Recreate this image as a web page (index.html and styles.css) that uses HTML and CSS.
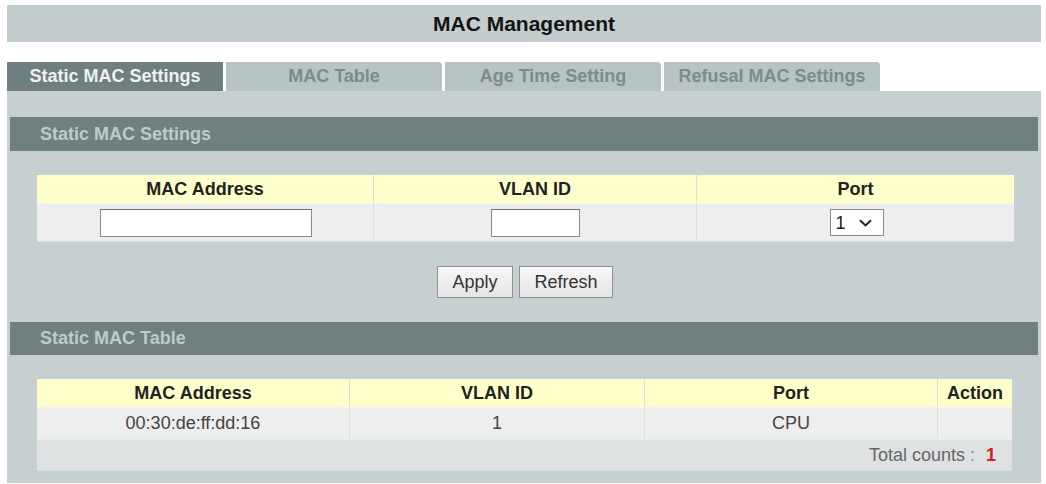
FILE: index.html
```html
<!DOCTYPE html>
<html lang="en">
<head>
    <meta charset="UTF-8">
    <meta name="viewport" content="width=device-width, initial-scale=1.0">
    <title>MAC Management</title>
    <link rel="stylesheet" href="styles.css">
</head>
<body>
    <div class="page">
        <div class="title-bar">MAC Management</div>

        <ul class="tabs">
            <li class="tab active">Static MAC Settings</li>
            <li class="tab">MAC Table</li>
            <li class="tab">Age Time Setting</li>
            <li class="tab">Refusal MAC Settings</li>
        </ul>

        <div class="panel">
            <div class="section-head">Static MAC Settings</div>
            <table class="grid grid-form">
                <tr class="head">
                    <th class="col-mac">MAC Address</th>
                    <th class="col-vlan">VLAN ID</th>
                    <th>Port</th>
                </tr>
                <tr class="row">
                    <td><input type="text" class="field field-mac"></td>
                    <td><input type="text" class="field field-vlan"></td>
                    <td>
                        <span class="select-wrap">
                            <select class="select">
                                <option>1</option>
                                <option>2</option>
                                <option>3</option>
                                <option>4</option>
                            </select>
                            <svg class="chevron" width="13" height="8" viewBox="0 0 13 8">
                                <path d="M1 1.2 L6.5 6.4 L12 1.2" fill="none" stroke="#222" stroke-width="2"/>
                            </svg>
                        </span>
                    </td>
                </tr>
            </table>

            <div class="actions">
                <button class="btn btn-apply">Apply</button>
                <button class="btn btn-refresh">Refresh</button>
            </div>

            <div class="section-head section-head-list">Static MAC Table</div>
            <table class="grid grid-list">
                <tr class="head">
                    <th class="col-mac2">MAC Address</th>
                    <th class="col-vlan2">VLAN ID</th>
                    <th class="col-port2">Port</th>
                    <th>Action</th>
                </tr>
                <tr class="row">
                    <td>00:30:de:ff:dd:16</td>
                    <td>1</td>
                    <td>CPU</td>
                    <td></td>
                </tr>
                <tr class="total">
                    <td colspan="4">Total counts<span class="colon"> : </span><b class="count">1</b></td>
                </tr>
            </table>
        </div>
    </div>
</body>
</html>
```

FILE: styles.css
```css
body {
    margin: 0;
    background: #fff;
    font-family: "Liberation Sans", Arial, sans-serif;
    color: #333;
}

.page {
    margin: 5px 5px 0 7px;
}

.title-bar {
    height: 37px;
    line-height: 37px;
    background: #c4cdcd;
    text-align: center;
    font-size: 21px;
    font-weight: bold;
    color: #141414;
}

/* tab strip */
.tabs {
    display: flex;
    gap: 3px;
    list-style: none;
    margin: 20px 0 0;
    padding: 0;
}

.tab {
    width: 216px;
    height: 29px;
    line-height: 29px;
    text-align: center;
    font-size: 18px;
    font-weight: bold;
    background: #b8c3c3;
    color: #7c8b8c;
    border-radius: 0 4px 0 0;
}

.tab.active {
    background: #6f7f7f;
    color: #eef1f1;
    border-radius: 0;
}

.panel {
    background: #c6d0d0;
    padding: 26px 3px 12px;
}

.section-head {
    height: 34px;
    line-height: 34px;
    padding-left: 30px;
    background: #6f807f;
    color: #c0caca;
    font-size: 18px;
    font-weight: bold;
}

.section-head-list {
    height: 33px;
    line-height: 33px;
    margin-top: 24px;
}

/* tables */
.grid {
    border-collapse: collapse;
    margin: 24px 24px 0 27px;
    width: calc(100% - 51px);
    font-size: 18px;
}

.grid-list {
    width: calc(100% - 53px);
}

.grid th,
.grid td {
    border: 1px solid #dadede;
    padding: 0;
    text-align: center;
}

.grid tr:first-child th {
    border-top: none;
}

.grid th:first-child,
.grid td:first-child {
    border-left: none;
}

.grid th:last-child,
.grid td:last-child {
    border-right: none;
}

.grid .head th {
    height: 28px;
    background: #ffffcc;
    color: #222;
    font-weight: bold;
    border-bottom-color: #f4f4ee;
}

.grid .row td {
    background: #eeeeee;
    color: #444;
}

.grid-form .row td {
    height: 37px;
}

.grid-list .row td {
    height: 30px;
}

.col-mac { width: 336px; }
.col-vlan { width: 322px; }

.col-mac2 { width: 312px; }
.col-vlan2 { width: 294px; }
.col-port2 { width: 292px; }

.grid .total td {
    height: 30px;
    background: #dfe2e2;
    border-top: 2px solid #e9ecec;
    text-align: right;
    padding-right: 16px;
    color: #666;
}

.colon {
    color: #888;
}

.count {
    color: #d42020;
    padding-left: 6px;
}

/* form controls */
.field {
    box-sizing: border-box;
    height: 28px;
    border: 1px solid #8a8a8a;
    border-top-color: #6e6e6e;
    background: #fff;
    vertical-align: middle;
    margin: 0;
}

.field-mac {
    width: 212px;
    margin-left: 2px;
}

.field-vlan {
    width: 89px;
}

.select-wrap {
    position: relative;
    display: inline-block;
    vertical-align: middle;
    margin-left: 2px;
}

.select {
    appearance: none;
    -webkit-appearance: none;
    box-sizing: border-box;
    width: 54px;
    height: 27px;
    padding: 0 0 0 5px;
    border: 1px solid #8a8a8a;
    background: #fff;
    font-family: "Liberation Sans", Arial, sans-serif;
    font-size: 18px;
    color: #222;
}

.chevron {
    position: absolute;
    right: 12px;
    top: 10px;
    pointer-events: none;
}

.actions {
    display: flex;
    justify-content: center;
    gap: 6px;
    margin-top: 24px;
    padding-left: 2px;
}

.btn {
    height: 32px;
    padding: 0;
    border: 1px solid #8e9191;
    background: linear-gradient(#f8f8f8, #e4e4e4);
    font-family: "Liberation Sans", Arial, sans-serif;
    font-size: 18px;
    color: #333;
}

.btn-apply { width: 76px; }
.btn-refresh { width: 94px; }
```
